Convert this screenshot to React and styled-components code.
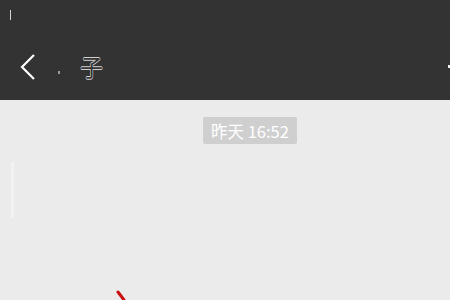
import React from "react";
import styled, { createGlobalStyle } from "styled-components";

const Global = createGlobalStyle`
  html, body { margin: 0; padding: 0; }
  body {
    width: 450px;
    height: 300px;
    overflow: hidden;
    background: #ebebeb;
    font-family: "Noto Sans CJK SC", "Noto Sans", sans-serif;
    -webkit-font-smoothing: antialiased;
  }
`;

const Header = styled.header`
  background: #333333;
  height: 100px;
  display: flex;
  flex-direction: column;
`;

const StatusBar = styled.div`
  height: 33px;
  display: flex;
  align-items: flex-start;
  padding: 10px 0 0 10px;
  box-sizing: border-box;
`;

const StatusTick = styled.span`
  width: 1px;
  height: 10px;
  background: #d8d8d8;
`;

const TitleRow = styled.div`
  flex: 1;
  display: flex;
  align-items: center;
  padding-left: 19px;
`;

const Back = styled.svg`
  width: 18px;
  height: 28px;
  flex: none;
`;

const Dot = styled.span`
  width: 2px;
  height: 3px;
  margin: 12px 0 0 21px;
  background: #9a9a9a;
`;

const Title = styled.span`
  margin-left: 20px;
  font-size: 23px;
  line-height: 1;
  color: #333333;
  text-shadow: 0.6px 0 #d0d0d0, -0.6px 0 #d0d0d0, 0 0.6px #d0d0d0,
    0 -0.6px #d0d0d0;
`;

const RightEdge = styled.span`
  margin-left: auto;
  width: 2px;
  height: 3px;
  background: #f0f0f0;
`;

const Body = styled.main`
  display: flex;
  flex-direction: column;
`;

const TimeRow = styled.div`
  display: flex;
  justify-content: center;
  padding: 17px 0 0 50px;
`;

const TimePill = styled.span`
  width: 94px;
  height: 27px;
  box-sizing: border-box;
  padding-left: 8px;
  display: flex;
  align-items: center;
  background: #cfcfcf;
  border-radius: 2px;
  color: #ffffff;
  font-size: 16.5px;
  white-space: nowrap;
`;

const SideBar = styled.div`
  margin: 18px 0 0 11px;
  width: 3px;
  height: 56px;
  border-radius: 2px;
  background: #f2f2f2;
`;

const Mark = styled.svg`
  margin: 71px 0 0 115px;
  width: 12px;
  height: 12px;
`;

export default function App() {
  return (
    <>
      <Global />
      <Header>
        <StatusBar>
          <StatusTick />
        </StatusBar>
        <TitleRow>
          <Back viewBox="0 0 18 28">
            <polyline
              points="15,2 3,14 15,26"
              fill="none"
              stroke="#ffffff"
              strokeWidth="2.2"
            />
          </Back>
          <Dot />
          <Title>子</Title>
          <RightEdge />
        </TitleRow>
      </Header>
      <Body>
        <TimeRow>
          <TimePill>昨天 16:52</TimePill>
        </TimeRow>
        <SideBar />
        <Mark viewBox="0 0 12 12">
          <line x1="3" y1="3" x2="9" y2="11" stroke="#c81010" strokeWidth="3" strokeLinecap="round" />
        </Mark>
      </Body>
    </>
  );
}
